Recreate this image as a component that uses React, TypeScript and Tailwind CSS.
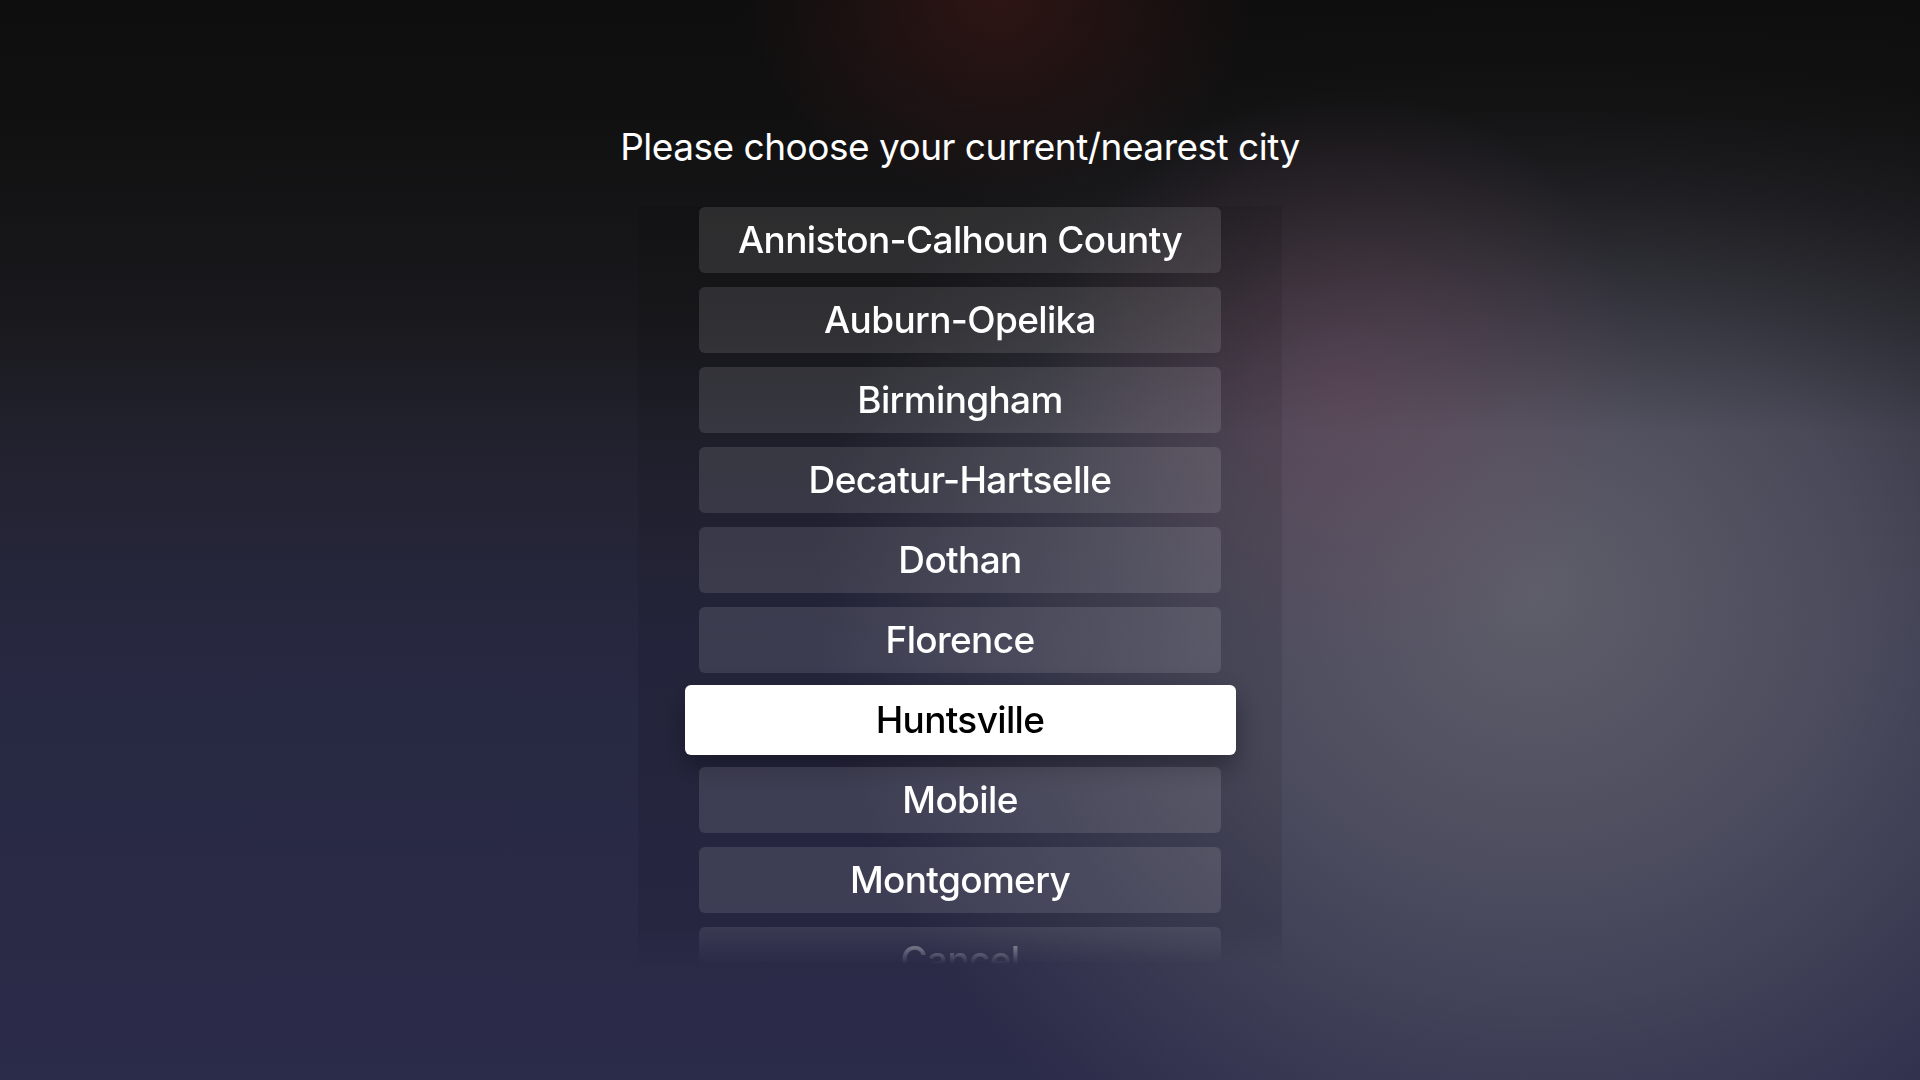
import React from "react";

const cities = [
  "Anniston-Calhoun County",
  "Auburn-Opelika",
  "Birmingham",
  "Decatur-Hartselle",
  "Dothan",
  "Florence",
  "Huntsville",
  "Mobile",
  "Montgomery",
];

export default function App() {
  return (
    <div
      className="relative w-[1920px] h-[1080px] overflow-hidden bg-[#1d1d22] bg-[radial-gradient(ellipse_260px_200px_at_52%_0%,rgba(85,28,28,0.45),transparent),radial-gradient(ellipse_300px_300px_at_70%_36%,rgba(115,72,92,0.4),transparent),linear-gradient(to_bottom,#0e0e0e_0%,rgba(14,14,14,0.85)_10%,rgba(14,14,14,0)_40%),radial-gradient(ellipse_720px_680px_at_80%_55%,#5e5e6a_0%,rgba(88,88,104,0.72)_45%,rgba(60,60,85,0)_100%),linear-gradient(to_bottom,#1c1c1e_0%,#1e1e24_30%,#272840_60%,#2b2b4a_100%)]"
      style={{ fontFamily: "Inter, 'Noto Sans', sans-serif" }}
    >
      <div className="flex flex-col items-center">
        <div className="pt-[123px] h-[171px] text-[37px] leading-[48px] text-white tracking-[-0.5px]">
          Please choose your current/nearest city
        </div>
        <div className="mt-[35px] w-[644px] h-[762px] bg-black/[0.08] [mask-image:linear-gradient(to_bottom,black_0px,black_722px,transparent_758px)]">
          <div className="flex flex-col items-center gap-[14px] pt-px">
            {cities.map((c) =>
              c === "Huntsville" ? (
                <div
                  key={c}
                  className="-my-[2px] w-[551px] h-[70px] rounded-[6px] bg-white flex items-center justify-center text-black text-[37px] font-medium tracking-[-0.65px] shadow-[0_12px_28px_rgba(0,0,0,0.35)]"
                >
                  {c}
                </div>
              ) : (
                <div
                  key={c}
                  className="w-[522px] h-[66px] rounded-[6px] bg-white/[0.11] flex items-center justify-center text-white text-[37px] font-medium tracking-[-0.65px]"
                >
                  {c}
                </div>
              )
            )}
            <div className="w-[522px] h-[66px] rounded-[6px] bg-white/[0.09] flex items-center justify-center text-white/70 text-[37px] font-medium tracking-[-0.65px]">
              Cancel
            </div>
          </div>
        </div>
      </div>
    </div>
  );
}
